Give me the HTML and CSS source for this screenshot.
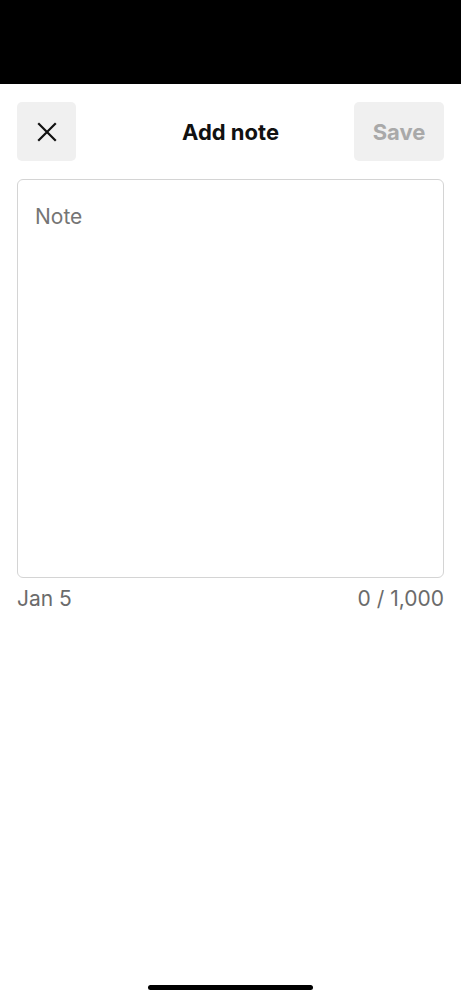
FILE: index.html
```html
<!DOCTYPE html>
<html lang="en">

<head>
  <meta charset="UTF-8">
  <title>Add note</title>
  <link rel="stylesheet" href="styles.css">
</head>

<body>

  <div class="status-bar"></div>

  <div class="sheet">
    <header class="toolbar">
      <button class="icon-btn" aria-label="Close">
        <svg width="20" height="20" viewBox="0 0 20 20">
          <path d="M2 2 L18 18 M18 2 L2 18" stroke="#111" stroke-width="2.2" stroke-linecap="square" fill="none" />
        </svg>
      </button>
      <h1 class="title">Add note</h1>
      <button class="save-btn" disabled>Save</button>
    </header>

    <div class="note-box">
      <textarea class="note-input" placeholder="Note" maxlength="1000"></textarea>
    </div>

    <div class="meta">
      <span>Jan 5</span>
      <span>0 / 1,000</span>
    </div>
  </div>

  <div class="home-bar"></div>

</body>

</html>
```

FILE: styles.css
```css
body {
  margin: 0;
  height: 999px;
  font-family: Inter, "Noto Sans", sans-serif;
  background: #fff;
  color: #111;
  display: flex;
  flex-direction: column;
}

.status-bar {
  height: 84px;
  background: #000;
}

.sheet {
  flex: 1;
  padding: 18px 17px 0;
}

.toolbar {
  display: grid;
  grid-template-columns: 1fr auto 1fr;
  align-items: center;
}

.icon-btn,
.save-btn {
  height: 59px;
  border: none;
  border-radius: 5px;
  background: #f0f0f0;
  font-family: inherit;
}

.icon-btn {
  width: 59px;
  justify-self: start;
  display: flex;
  align-items: center;
  justify-content: center;
  padding: 0;
}

.save-btn {
  width: 90px;
  justify-self: end;
  padding: 0;
  font-size: 22px;
  font-weight: 700;
  color: #a9a9a9;
}

.title {
  margin: 0;
  font-size: 22px;
  font-weight: 700;
}

.note-box {
  margin-top: 18px;
  height: 397px;
  border: 1px solid #d4d4d4;
  border-radius: 6px;
  display: flex;
}

.note-input {
  flex: 1;
  border: none;
  background: none;
  resize: none;
  outline: none;
  padding: 24px 17px;
  font-family: inherit;
  font-size: 21px;
  line-height: 26px;
  color: #111;
}

.note-input::placeholder {
  color: #757575;
}

.meta {
  display: flex;
  justify-content: space-between;
  margin-top: 8px;
  font-size: 21px;
  line-height: 26px;
  color: #6b6b6b;
}

.home-bar {
  width: 165px;
  height: 5px;
  border-radius: 3px;
  background: #000;
  margin: 0 auto 9px;
}
```
